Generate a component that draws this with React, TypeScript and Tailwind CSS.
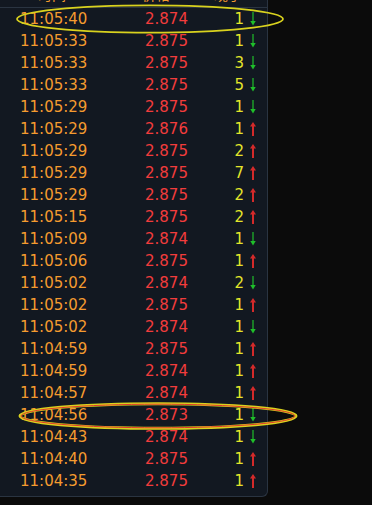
type Side = 'up' | 'down';

interface Trade {
  time: string;
  price: string;
  vol: number;
  side: Side;
}

const trades: Trade[] = [
  { time: '11:05:40', price: '2.874', vol: 1, side: 'down' },
  { time: '11:05:33', price: '2.875', vol: 1, side: 'down' },
  { time: '11:05:33', price: '2.875', vol: 3, side: 'down' },
  { time: '11:05:33', price: '2.875', vol: 5, side: 'down' },
  { time: '11:05:29', price: '2.875', vol: 1, side: 'down' },
  { time: '11:05:29', price: '2.876', vol: 1, side: 'up' },
  { time: '11:05:29', price: '2.875', vol: 2, side: 'up' },
  { time: '11:05:29', price: '2.875', vol: 7, side: 'up' },
  { time: '11:05:29', price: '2.875', vol: 2, side: 'up' },
  { time: '11:05:15', price: '2.875', vol: 2, side: 'up' },
  { time: '11:05:09', price: '2.874', vol: 1, side: 'down' },
  { time: '11:05:06', price: '2.875', vol: 1, side: 'up' },
  { time: '11:05:02', price: '2.874', vol: 2, side: 'down' },
  { time: '11:05:02', price: '2.875', vol: 1, side: 'up' },
  { time: '11:05:02', price: '2.874', vol: 1, side: 'down' },
  { time: '11:04:59', price: '2.875', vol: 1, side: 'up' },
  { time: '11:04:59', price: '2.874', vol: 1, side: 'up' },
  { time: '11:04:57', price: '2.874', vol: 1, side: 'up' },
  { time: '11:04:56', price: '2.873', vol: 1, side: 'down' },
  { time: '11:04:43', price: '2.874', vol: 1, side: 'down' },
  { time: '11:04:40', price: '2.875', vol: 1, side: 'up' },
  { time: '11:04:35', price: '2.875', vol: 1, side: 'up' },
];

const Arrow = ({ side }: { side: Side }) =>
  side === 'down' ? (
    <svg width="8" height="14" viewBox="0 0 8 14" className="shrink-0">
      <line x1="4" y1="0" x2="4" y2="11" stroke="#1fbf2a" strokeWidth="1.2" />
      <polygon points="1.3,9 6.7,9 4,13.5" fill="#1fbf2a" />
    </svg>
  ) : (
    <svg width="8" height="14" viewBox="0 0 8 14" className="shrink-0">
      <line x1="4" y1="3" x2="4" y2="14" stroke="#d42a2a" strokeWidth="2" />
      <polygon points="1,4.5 7,4.5 4,0" fill="#d42a2a" />
    </svg>
  );

export default function App() {
  return (
    <div className="relative h-[505px] w-[372px] overflow-hidden bg-[#0b0b0b]">
      {/* Trade ticker panel (header scrolled partly out of view) */}
      <div className="-mt-[19px] w-[268px] rounded-br-md border-r border-b border-[#2a3441] bg-[#121821] pb-[4px] font-['DejaVu_Sans',sans-serif]">
        <div className="flex border-b border-[#2a3441] py-[3px] text-[14px] leading-5 text-[#f59b2f] font-['Noto_Sans_CJK_SC',sans-serif]">
          <span className="w-[142px] pl-[38px]">时间</span>
          <span className="w-[72px]">价格</span>
          <span>现手</span>
        </div>

        {trades.map((t, i) => (
          <div key={i} className="flex h-[22px] items-center text-[15px] leading-[22px]">
            <span className="w-[145px] pl-[20px] text-[#f59b2f]">{t.time}</span>
            <span className="text-[#f23c3c]">{t.price}</span>
            <span className="ml-auto flex items-center gap-[5px] pr-[10px] text-[#e4e42a]">
              {t.vol}
              <Arrow side={t.side} />
            </span>
          </div>
        ))}
      </div>

      {/* Hand-drawn highlight annotations */}
      <svg className="pointer-events-none absolute inset-0" width="372" height="505">
        <ellipse cx="150" cy="19" rx="133" ry="13.6" fill="none" stroke="#d9d21e" strokeWidth="1.8" />
        <ellipse cx="158" cy="416" rx="138" ry="12.3" fill="none" stroke="#d9d21e" strokeWidth="3" />
        <ellipse cx="158" cy="416" rx="137" ry="11.8" fill="none" stroke="#e03a2a" strokeWidth="1" />
      </svg>
    </div>
  );
}
